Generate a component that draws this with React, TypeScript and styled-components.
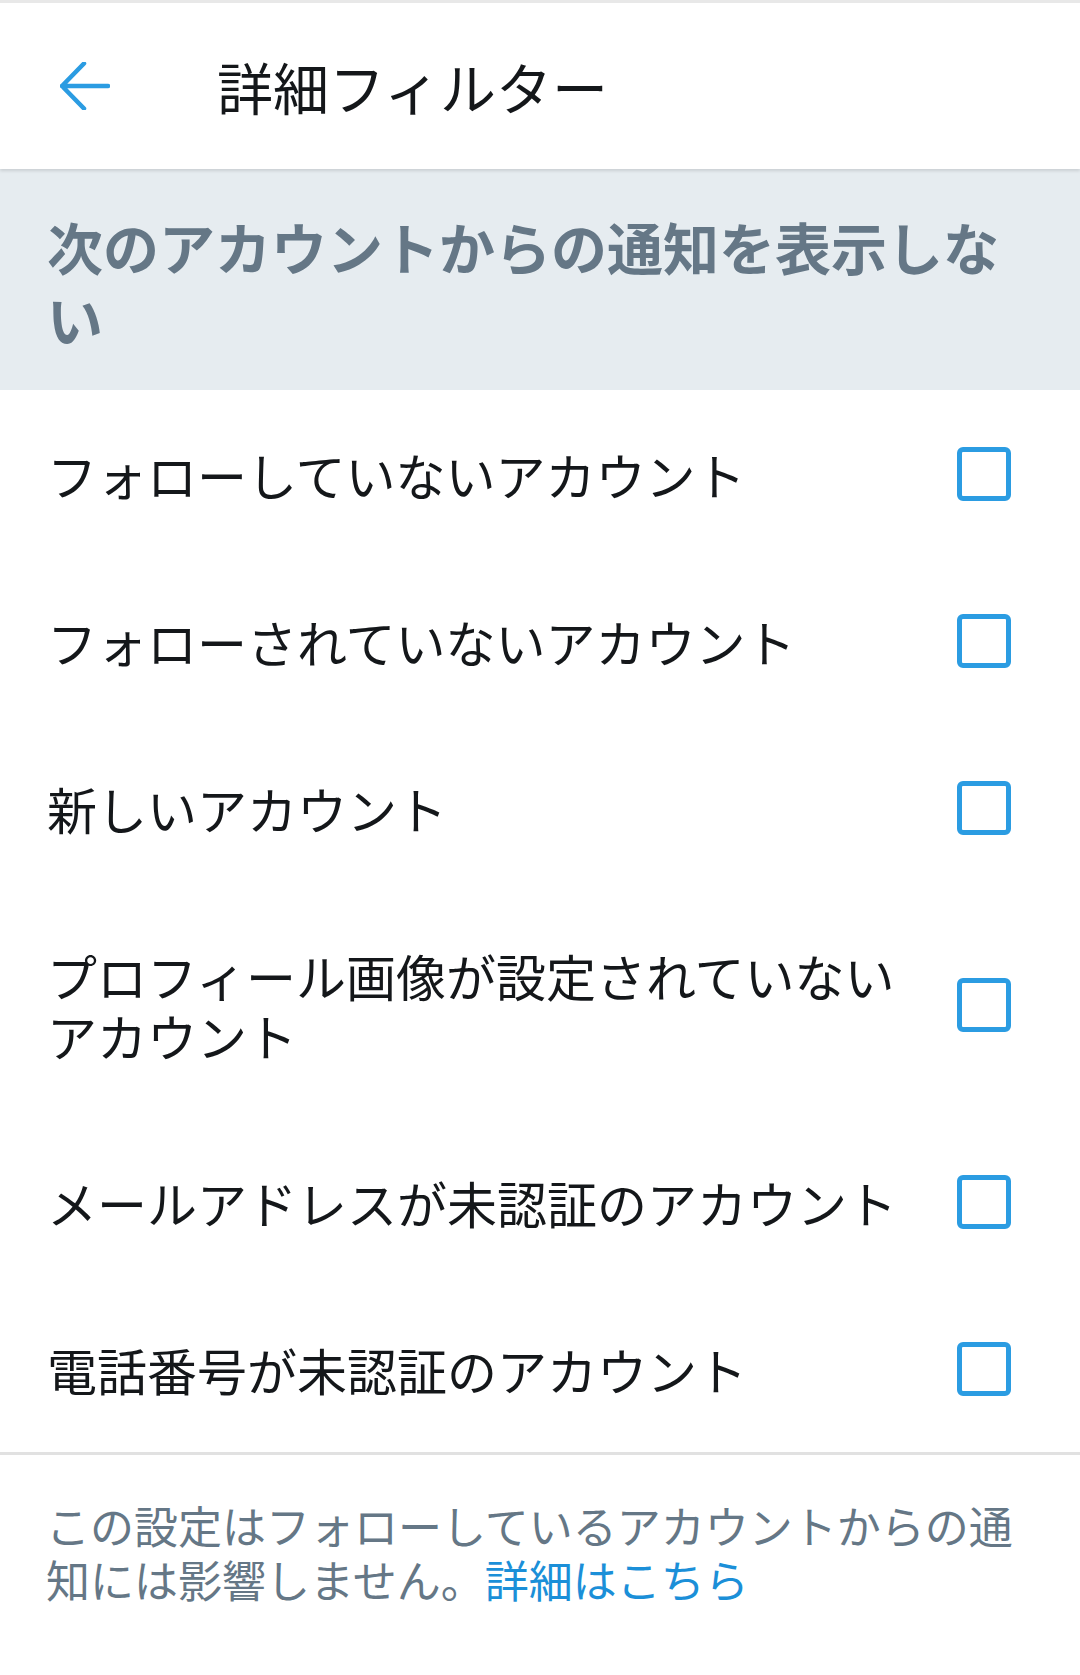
import React from 'react';
import styled, { createGlobalStyle } from 'styled-components';

const GlobalStyle = createGlobalStyle`
  body {
    margin: 0;
    background: #ffffff;
    font-family: 'Noto Sans CJK JP', 'Noto Sans', sans-serif;
  }
`;

const Page = styled.div`
  width: 1080px;
  min-height: 1675px;
  background: #ffffff;
`;

const Header = styled.header`
  height: 166px;
  border-top: 3px solid #e8e8e8;
  display: flex;
  align-items: center;
  padding-left: 60px;
  box-shadow: 0 2px 3px rgba(0, 0, 0, 0.12);
  position: relative;
  z-index: 1;
`;

const BackButton = styled.button`
  width: 50px;
  height: 48px;
  padding: 0;
  border: none;
  background: none;
  display: flex;
  align-items: center;
  justify-content: center;
`;

const Title = styled.h1`
  margin: 0 0 0 107px;
  font-size: 56px;
  font-weight: 400;
  color: #14171a;
  line-height: 1;
`;

const SectionHeader = styled.div`
  background: #e6ecf0;
  padding: 41px 60px 36px 47px;
  font-size: 56px;
  font-weight: 700;
  line-height: 72px;
  color: #657786;
`;

const Row = styled.label`
  display: flex;
  align-items: center;
  padding: 54px 69px 53px 47px;
  gap: 40px;
`;

const RowText = styled.span`
  flex: 1;
  font-size: 50px;
  line-height: 60px;
  color: #14171a;
`;

const CheckBox = styled.span`
  flex: none;
  width: 54px;
  height: 54px;
  box-sizing: border-box;
  border: 5px solid #2b9ce2;
  border-radius: 6px;
`;

const Divider = styled.hr`
  margin: 0;
  border: none;
  height: 3px;
  background: #e1e1e1;
`;

const Footer = styled.div`
  padding: 43px 50px 40px 46px;
  font-size: 44px;
  line-height: 54px;
  color: #657786;
`;

const Link = styled.a`
  color: #1b8fd8;
  text-decoration: none;
`;

const options = [
  'フォローしていないアカウント',
  'フォローされていないアカウント',
  '新しいアカウント',
  'プロフィール画像が設定されていないアカウント',
  'メールアドレスが未認証のアカウント',
  '電話番号が未認証のアカウント',
];

const BackArrow = () => (
  <svg width="50" height="48" viewBox="0 0 50 48" fill="none">
    <path
      d="M24 1.5 L2 24 L24 46.5 M2 24 H48"
      stroke="#2b9ce2"
      strokeWidth="4.5"
      strokeLinecap="round"
      strokeLinejoin="round"
    />
  </svg>
);

export default function App() {
  return (
    <Page>
      <GlobalStyle />
      <Header>
        <BackButton aria-label="戻る">
          <BackArrow />
        </BackButton>
        <Title>詳細フィルター</Title>
      </Header>
      <SectionHeader>次のアカウントからの通知を表示しない</SectionHeader>
      {options.map((text) => (
        <Row key={text}>
          <RowText>{text}</RowText>
          <CheckBox />
        </Row>
      ))}
      <Divider />
      <Footer>
        この設定はフォローしているアカウントからの通知には影響しません。<Link href="#">詳細はこちら</Link>
      </Footer>
    </Page>
  );
}
